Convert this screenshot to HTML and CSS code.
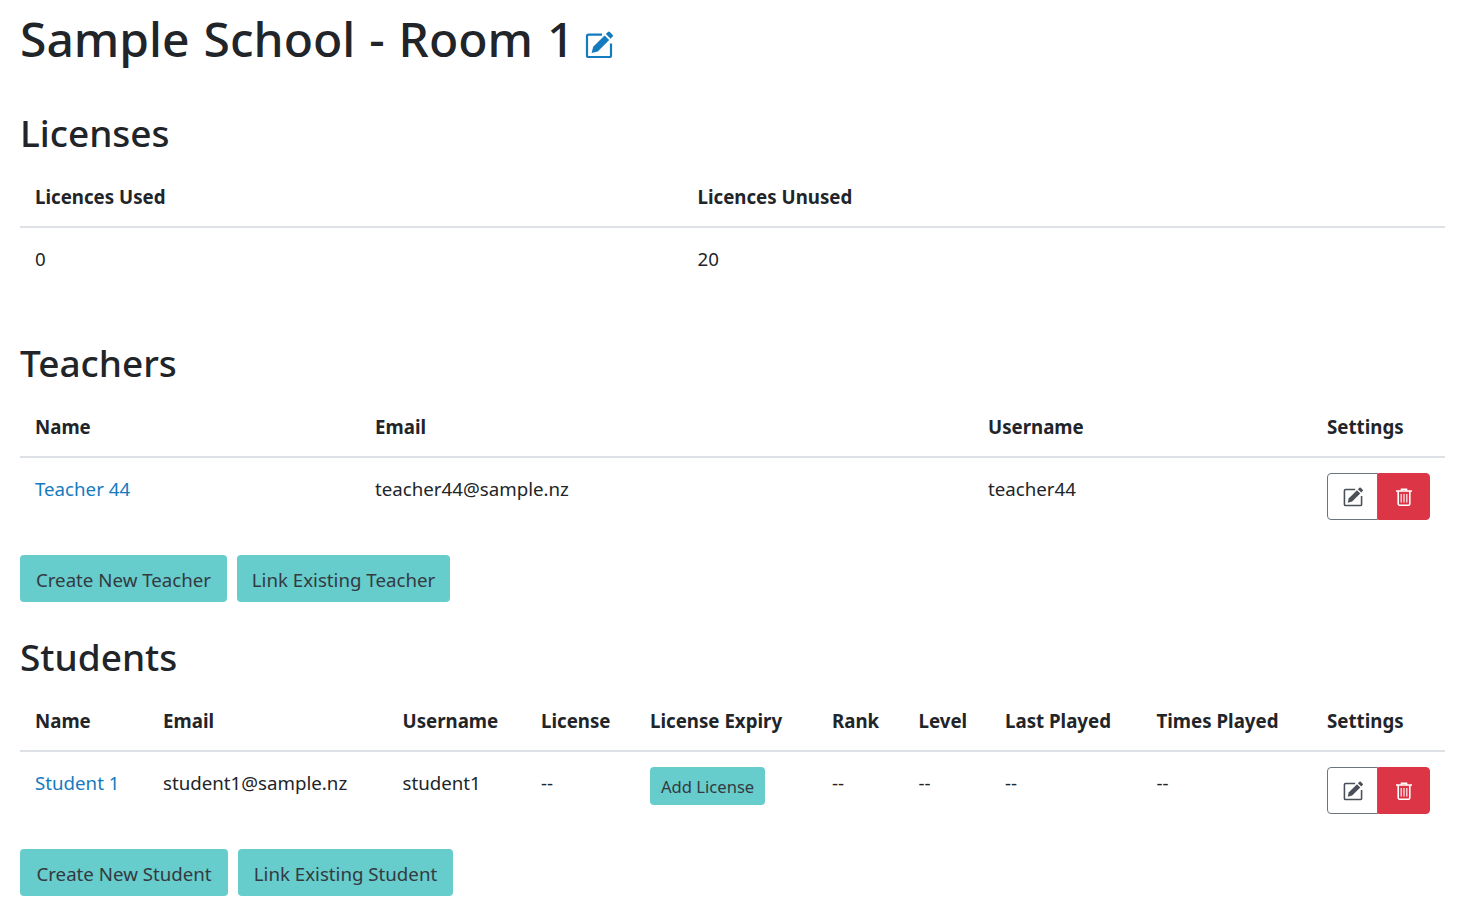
FILE: index.html
```html
<!DOCTYPE html>
<html lang="en">
<head>
<meta charset="utf-8">
<title>Sample School - Room 1</title>
<link rel="stylesheet" href="styles.css">
</head>
<body>
<svg class="sprite" aria-hidden="true">
  <symbol id="i-edit" viewBox="0 0 28 28">
    <path class="edit-box" d="M17 3.6H3.6A1.6 1.6 0 0 0 2 5.2v19.2A1.6 1.6 0 0 0 3.6 26h20.8a1.6 1.6 0 0 0 1.6-1.6V12.5"/>
    <path class="edit-pen" d="M6.6 22l1.6-6.2L19.6 4.4l4.6 4.6L12.8 20.4z"/>
    <path class="edit-pen" d="M20.9 3.1l2-2a1.4 1.4 0 0 1 2 0l2.6 2.6a1.4 1.4 0 0 1 0 2l-2 2z"/>
  </symbol>
  <symbol id="i-trash" viewBox="0 0 16 18">
    <path class="trash-lines" d="M5.5 2V1.2h5V2M.5 3h15M2.2 3.2v12.6A1.4 1.4 0 0 0 3.6 17.2h8.8a1.4 1.4 0 0 0 1.4-1.4V3.2"/>
    <path class="trash-bars" d="M5.2 6v8.5M8 6v8.5M10.8 6v8.5"/>
  </symbol>
</svg>
<main class="page">
  <h1 class="title">Sample School - Room 1 <a class="title-edit" href="#"><svg class="icon-title"><use href="#i-edit"/></svg></a></h1>

  <section class="block block-wide">
    <h2 class="heading">Licenses</h2>
    <table class="grid">
      <colgroup><col class="l1"><col class="l2"></colgroup>
      <thead><tr><th>Licences Used</th><th>Licences Unused</th></tr></thead>
      <tbody><tr><td>0</td><td>20</td></tr></tbody>
    </table>
  </section>

  <section class="block">
    <h2 class="heading">Teachers</h2>
    <table class="grid">
      <colgroup><col class="t1"><col class="t2"><col class="t3"><col class="t4"></colgroup>
      <thead><tr><th>Name</th><th>Email</th><th>Username</th><th>Settings</th></tr></thead>
      <tbody><tr>
        <td><a class="link" href="#">Teacher 44</a></td>
        <td>teacher44@sample.nz</td>
        <td>teacher44</td>
        <td class="cell-btn"><div class="group"><button class="btn btn-outline"><svg class="icon-edit"><use href="#i-edit"/></svg></button><button class="btn btn-danger"><svg class="icon-trash"><use href="#i-trash"/></svg></button></div></td>
      </tr></tbody>
    </table>
    <div class="actions"><button class="btn btn-teal w-207">Create New Teacher</button><button class="btn btn-teal w-213">Link Existing Teacher</button></div>
  </section>

  <section class="block">
    <h2 class="heading">Students</h2>
    <table class="grid">
      <colgroup><col class="s1"><col class="s2"><col class="s3"><col class="s4"><col class="s5"><col class="s6"><col class="s7"><col class="s8"><col class="s9"><col class="s10"></colgroup>
      <thead><tr><th>Name</th><th>Email</th><th>Username</th><th>License</th><th>License Expiry</th><th>Rank</th><th>Level</th><th>Last Played</th><th>Times Played</th><th>Settings</th></tr></thead>
      <tbody><tr>
        <td><a class="link" href="#">Student 1</a></td>
        <td>student1@sample.nz</td>
        <td>student1</td>
        <td>--</td>
        <td class="cell-btn"><button class="btn btn-teal btn-sm">Add License</button></td>
        <td>--</td>
        <td>--</td>
        <td>--</td>
        <td>--</td>
        <td class="cell-btn"><div class="group"><button class="btn btn-outline"><svg class="icon-edit"><use href="#i-edit"/></svg></button><button class="btn btn-danger"><svg class="icon-trash"><use href="#i-trash"/></svg></button></div></td>
      </tr></tbody>
    </table>
    <div class="actions"><button class="btn btn-teal w-208">Create New Student</button><button class="btn btn-teal w-215">Link Existing Student</button></div>
  </section>
</main>
</body>
</html>
```

FILE: styles.css
```css
* { box-sizing: border-box; }
html, body { margin: 0; padding: 0; }
body {
  background: #fff;
  color: #212529;
  font-family: "Noto Sans", "Open Sans", sans-serif;
  font-size: 18.7px;
  line-height: 30px;
  overflow: hidden;
}
.sprite { display: none; }
.page { padding: 9px 13px 0 20px; }
.title {
  margin: 0 0 39px;
  font-size: 48px;
  font-weight: 500;
  line-height: 60px;
  word-spacing: 1.5px;
  white-space: nowrap;
}
.title-edit { color: #157bbf; margin-left: -3px; }
.icon-title { width: 28px; height: 28px; vertical-align: -2px; }
.block { margin-top: 30px; }
.block-wide .grid { margin-bottom: 50px; }
.heading {
  margin: 0 0 9px;
  padding-top: 1px;
  font-size: 37px;
  font-weight: 500;
  line-height: 48px;
}
.grid {
  width: 1425px;
  table-layout: fixed;
  border-collapse: collapse;
  margin-bottom: 20px;
}
.grid th, .grid td {
  padding: 16px 15px 14px;
  text-align: left;
  vertical-align: top;
  white-space: nowrap;
}
.grid .cell-btn { padding: 15px; }
.grid th { font-weight: 700; border-bottom: 2px solid #dee2e6; }
.l1 { width: 662.5px; } .l2 { width: 762.5px; }
.t1 { width: 340px; } .t2 { width: 613px; } .t3 { width: 339px; } .t4 { width: 133px; }
.s1 { width: 128px; } .s2 { width: 239.5px; } .s3 { width: 138.5px; } .s4 { width: 109px; }
.s5 { width: 182px; } .s6 { width: 86.5px; } .s7 { width: 86.5px; } .s8 { width: 151.5px; }
.s9 { width: 170.5px; } .s10 { width: 133px; }
.link { color: #157bbf; text-decoration: none; }
.btn {
  display: inline-block;
  height: 47px;
  padding: 8px 0 6px;
  border: 1px solid transparent;
  border-radius: 4px;
  font: inherit;
  color: #343a40;
  cursor: pointer;
}
.btn-teal { background: #66cccc; white-space: nowrap; }
.w-207 { width: 207px; } .w-208 { width: 208px; } .w-213 { width: 213px; } .w-215 { width: 215px; }
.btn-sm { height: 38px; padding: 4px 10px 2px; font-size: 16.6px; line-height: 26px; }
.actions { display: flex; gap: 10px; }
.group { display: flex; width: 103px; }
.group .btn { display: flex; align-items: center; justify-content: center; padding: 0; }
.btn-outline { width: 51px; background: #fff; border-color: #6c757d; border-radius: 4px 0 0 4px; color: #495057; }
.btn-danger { width: 52px; background: #dc3545; border-color: #dc3545; border-radius: 0 4px 4px 0; color: #fff; }
.icon-edit { width: 20px; height: 20px; }
.icon-trash { width: 16px; height: 18px; }
.edit-box { fill: none; stroke: currentColor; stroke-width: 2.2; }
.edit-pen { fill: currentColor; }
.trash-lines { fill: none; stroke: currentColor; stroke-width: 1.6; stroke-linecap: round; }
.trash-bars { fill: none; stroke: currentColor; stroke-width: 1.3; opacity: .85; }
```
